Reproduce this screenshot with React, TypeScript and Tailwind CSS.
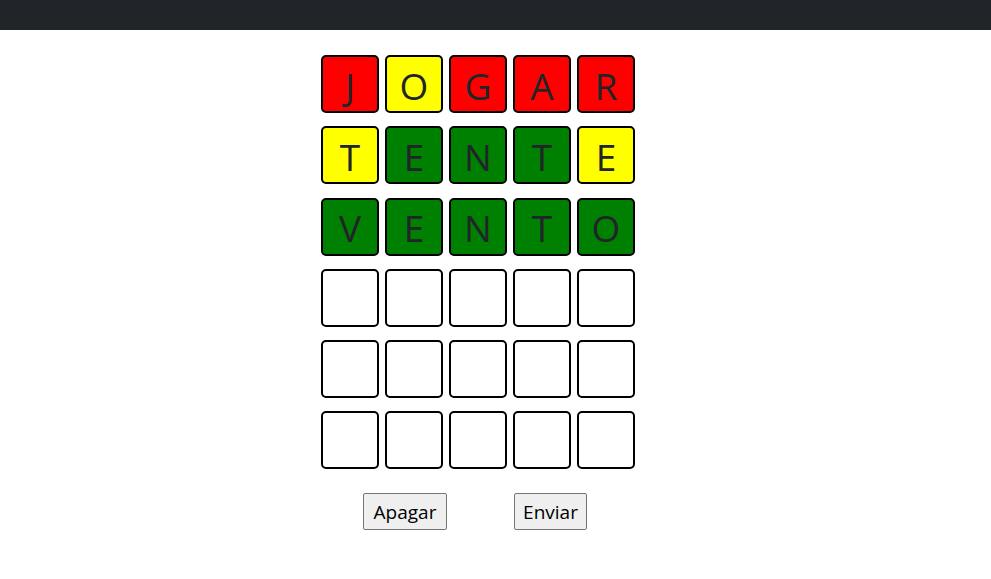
import React from "react";

type Cell = { l: string; c: string };

const R = "bg-[#ff0000]";
const Y = "bg-[#ffff00]";
const G = "bg-[#008000]";
const W = "bg-white";

const rows: Cell[][] = [
  [
    { l: "J", c: R },
    { l: "O", c: Y },
    { l: "G", c: R },
    { l: "A", c: R },
    { l: "R", c: R },
  ],
  [
    { l: "T", c: Y },
    { l: "E", c: G },
    { l: "N", c: G },
    { l: "T", c: G },
    { l: "E", c: Y },
  ],
  [
    { l: "V", c: G },
    { l: "E", c: G },
    { l: "N", c: G },
    { l: "T", c: G },
    { l: "O", c: G },
  ],
  Array.from({ length: 5 }, () => ({ l: "", c: W })),
  Array.from({ length: 5 }, () => ({ l: "", c: W })),
  Array.from({ length: 5 }, () => ({ l: "", c: W })),
];

export default function App() {
  return (
    <div
      className="min-h-[579px] bg-white text-[#212529]"
      style={{ fontFamily: '"Open Sans", "Noto Sans", sans-serif' }}
    >
      <div className="h-[30px] bg-[#212529]" />
      <div className="w-[956px] flex flex-col items-center pt-[25px]">
        <div className="flex flex-col gap-[13.25px]">
          {rows.map((row, i) => (
            <div key={i} className="flex gap-[6px]">
              {row.map((cell, j) => (
                <div
                  key={j}
                  className={`w-[58px] h-[58px] border-2 border-black rounded-[5px] flex items-center justify-center pt-[2px] text-[37px] font-normal leading-none ${cell.c}`}
                >
                  {cell.l}
                </div>
              ))}
            </div>
          ))}
        </div>
        <div className="flex gap-[67px] mt-[24px] mr-[6px]">
          <button className="w-[84px] h-[37px] bg-[#efefef] border border-[#767676] rounded-[2px] text-[19px] text-black flex items-center justify-center">
            Apagar
          </button>
          <button className="w-[73px] h-[37px] bg-[#efefef] border border-[#767676] rounded-[2px] text-[19px] text-black flex items-center justify-center">
            Enviar
          </button>
        </div>
      </div>
    </div>
  );
}
